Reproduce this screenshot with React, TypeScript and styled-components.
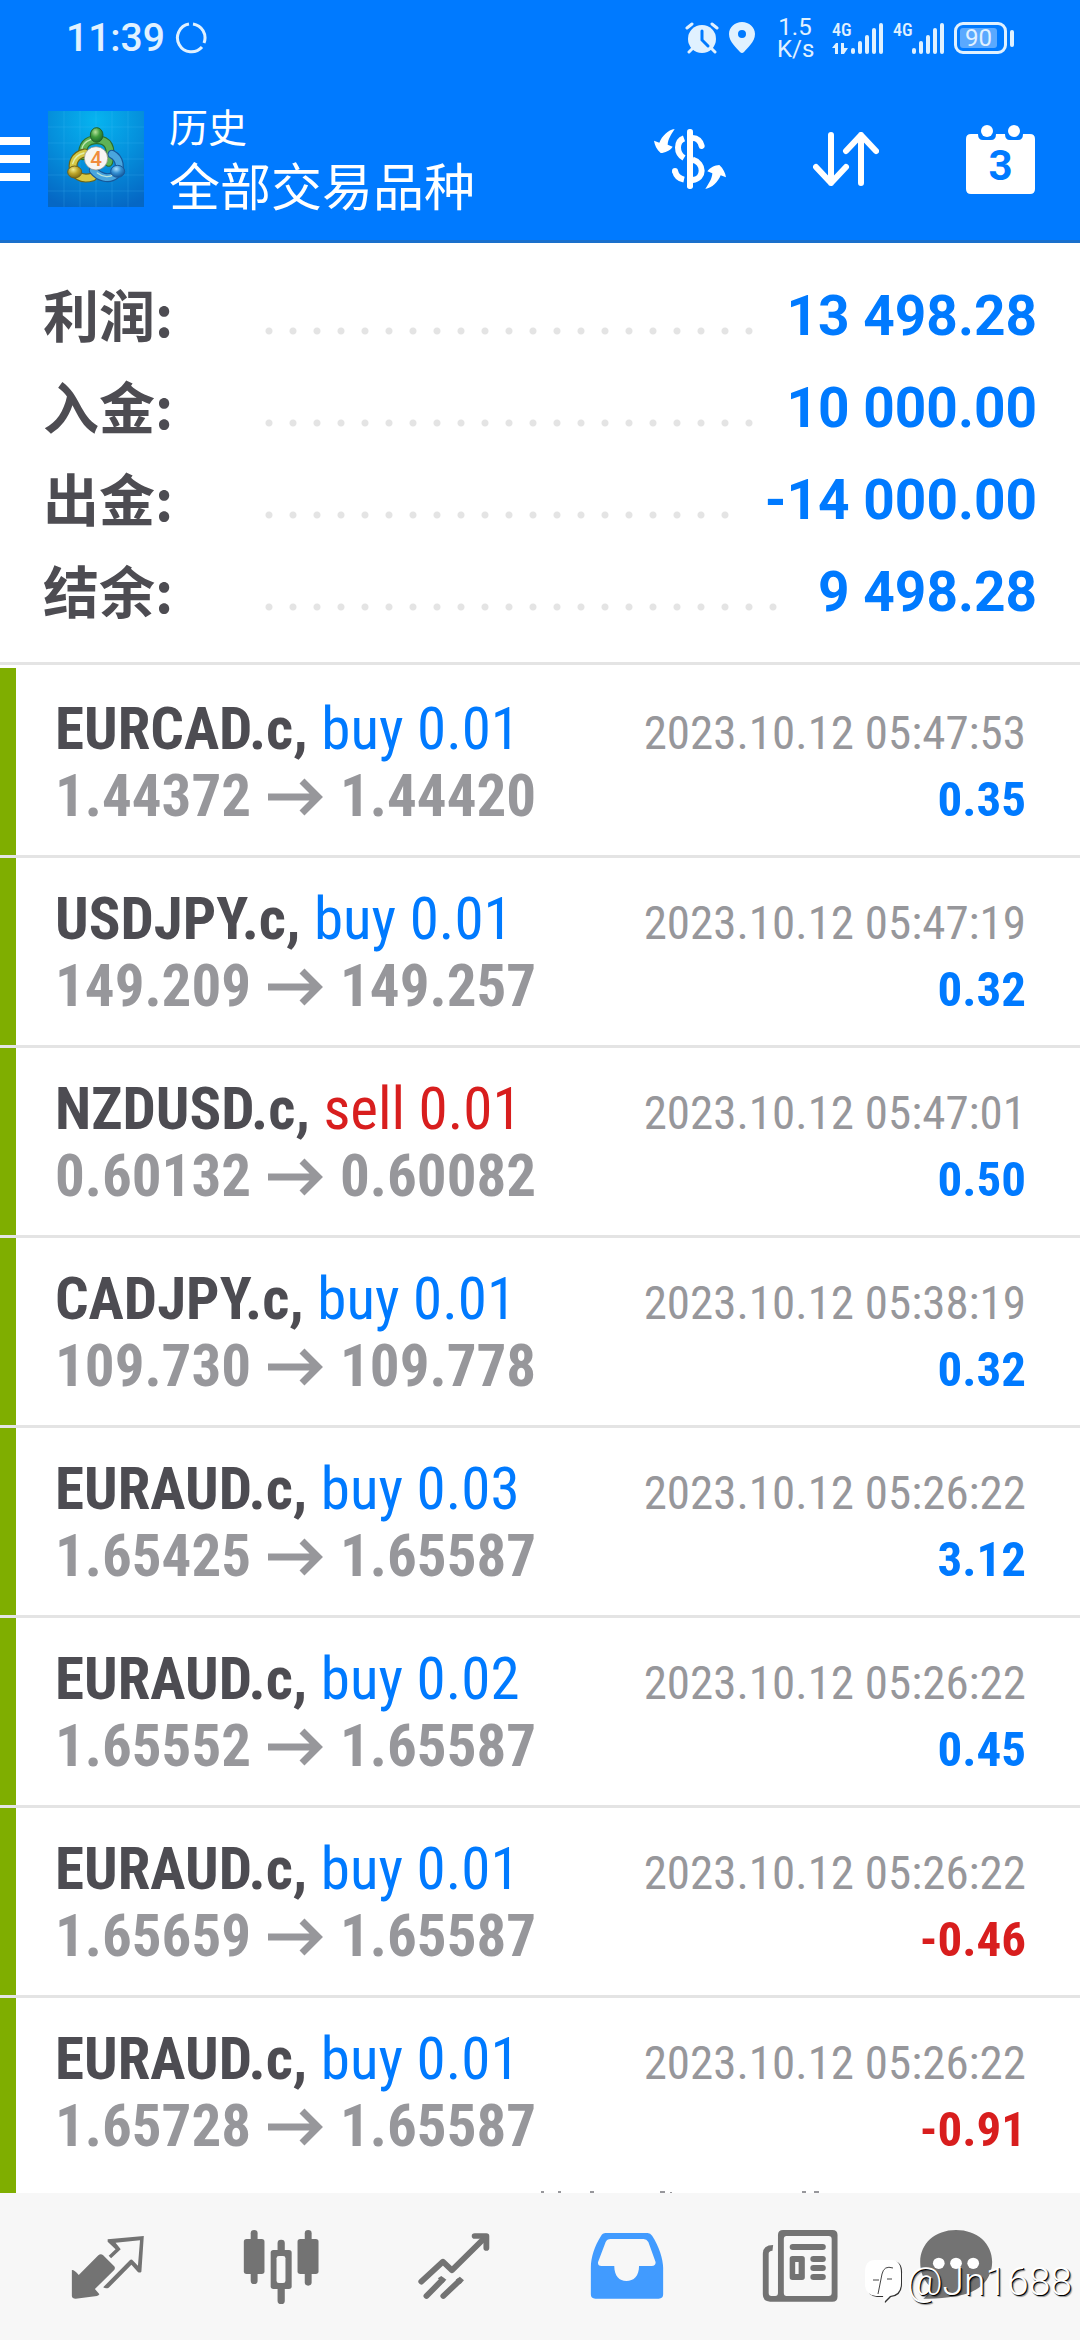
import React from 'react';
import styled, { createGlobalStyle } from 'styled-components';

const sans = 'Roboto, "Noto Sans CJK SC", sans-serif';
const condensed = '"Roboto Condensed", Roboto, "Noto Sans CJK SC", sans-serif';
const color = {
  blue: '#007aff',
  red: '#d81e1e',
  ink: '#4d4c52',
  gray: '#97979b',
  line: '#e4e4e4',
  green: '#7fae00',
  nav: '#f7f7f7',
  icon: '#737373',
  status: '#e0f1ff',
};

const GlobalStyle = createGlobalStyle`
  * { box-sizing: border-box; }
  body { margin: 0; background: #fff; font-family: ${sans}; }
  button { appearance: none; border: 0; padding: 0; background: none; font: inherit; color: inherit; cursor: pointer; }
  svg { display: block; flex: none; }
`;

const Page = styled.div`
  position: relative;
  display: flex;
  flex-direction: column;
  height: 100vh;
  overflow: hidden;
`;

const Header = styled.header`
  flex: none;
  background: ${color.blue};
  color: #fff;
  border-bottom: 3px solid #1a70cc;
`;

const StatusBar = styled.div`
  display: flex;
  align-items: center;
  justify-content: space-between;
  height: 76px;
  padding: 0 66px 0 66px;
  color: ${color.status};
`;

const StatusGroup = styled.div`
  display: flex;
  align-items: center;
  gap: 10px;
`;

const Clock = styled.time`
  font-size: 39px;
  font-weight: 500;
  line-height: 48px;
`;

const Speed = styled.div`
  width: 36px;
  margin: 0 9px 0 12px;
  text-align: center;
  font-size: 24px;
  line-height: 22px;
`;

const Network = styled.div`
  display: flex;
  height: 31px;
`;

const NetworkLabel = styled.span`
  display: flex;
  flex-direction: column;
  width: 19px;
  justify-content: space-between;
  font: 500 18px/14px ${condensed};
`;

const Battery = styled.div`
  display: flex;
  align-items: center;
  gap: 3px;
`;

const BatteryBody = styled.div`
  display: flex;
  width: 53px;
  height: 32px;
  padding: 3px;
  border: 3px solid ${color.status};
  border-radius: 9px;
`;

const BatteryFill = styled.div`
  width: 37px;
  border-radius: 3px;
  background: #5aa9ff;
  text-align: center;
  font-size: 24px;
  line-height: 20px;
`;

const BatteryNub = styled.div`
  width: 4px;
  height: 17px;
  border-radius: 2px;
  background: ${color.status};
`;

const Toolbar = styled.div`
  display: flex;
  align-items: center;
  height: 164px;
  padding: 2px 45px 0 0;
`;

const MenuButton = styled.button`
  display: flex;
  flex-direction: column;
  gap: 10px;
  width: 30px;
  margin-right: 18px;
`;

const MenuBar = styled.span`
  height: 8px;
  background: #fff;
`;

const Titles = styled.div`
  flex: 1;
  padding: 3px 0 0 25px;
`;

const Subtitle = styled.div`
  font-size: 39px;
  line-height: 56px;
`;

const Title = styled.h1`
  margin: 0;
  font-size: 51px;
  font-weight: 400;
  line-height: 64px;
`;

const Actions = styled.div`
  display: flex;
  align-items: center;
  gap: 87px;
`;

const CalendarButton = styled.button`
  display: grid;
  place-items: center;
  & > * { grid-area: 1 / 1; }
`;

const CalendarDay = styled.span`
  padding-top: 14px;
  color: ${color.blue};
  font-size: 42px;
  font-weight: 700;
  line-height: 48px;
`;

const Summary = styled.dl`
  flex: none;
  margin: 0;
  padding: 26px 43px 25px;
  border-bottom: 3px solid ${color.line};
`;

const SummaryRow = styled.div`
  display: flex;
  height: 92px;
`;

const SummaryLabel = styled.dt`
  width: 214px;
  color: ${color.ink};
  font: 700 56px/88px "Noto Sans CJK SC", sans-serif;
`;

const Leader = styled.span`
  flex: 1;
  margin: 58px 28px 0 0;
  height: 8px;
  background: radial-gradient(circle at center, ${color.line} 3px, transparent 4px) 0 0 / 24px 8px repeat-x;
`;

const SummaryValue = styled.dd`
  margin: 0;
  color: ${color.blue};
  font-size: 55px;
  font-weight: 700;
  line-height: 94px;
`;

const Deals = styled.ul`
  flex: 1;
  min-height: 0;
  display: flex;
  flex-direction: column;
  overflow: hidden;
  margin: 0;
  padding: 3px 0 0;
  list-style: none;
  font-family: ${condensed};
`;

const Deal = styled.li`
  flex: none;
  display: flex;
  flex-direction: column;
  min-height: 187px;
  padding: 27px 54px 0 39px;
  border-left: 16px solid ${color.green};
  & + & { margin-top: 3px; box-shadow: -16px -3px ${color.line}, 0 -3px ${color.line}; }
  &:last-child { flex: 1 0 auto; }
`;

const DealLine = styled.div`
  display: flex;
  align-items: baseline;
  justify-content: space-between;
  height: 67px;
  line-height: 67px;
  white-space: nowrap;
`;

const Symbol = styled.span`
  color: ${color.ink};
  font-size: 59px;
  font-weight: 700;
`;

const Volume = styled.span<{ $sell: boolean }>`
  color: ${(p) => (p.$sell ? color.red : color.blue)};
  font-weight: 400;
`;

const Prices = styled.span`
  display: flex;
  align-items: baseline;
  gap: 17px;
  color: ${color.gray};
  font-size: 59px;
  font-weight: 700;
`;

const Stamp = styled.time`
  color: ${color.gray};
  font-size: 47px;
`;

const Profit = styled.span<{ $loss: boolean }>`
  color: ${(p) => (p.$loss ? color.red : color.blue)};
  font-size: 49px;
  font-weight: 700;
`;

const CutOff = styled.svg`
  margin: auto 0 0 469px;
`;

const Nav = styled.nav`
  flex: none;
  display: grid;
  grid-template-columns: repeat(5, 173fr) 140fr;
  height: 147px;
  padding: 0 54px 0 22px;
  background: ${color.nav};
`;

const NavButton = styled.button<{ $active?: boolean }>`
  display: grid;
  place-items: center;
  color: ${(p) => (p.$active ? '#419bff' : color.icon)};
`;

const Watermark = styled.div`
  position: absolute;
  right: 8px;
  bottom: 34px;
  display: flex;
  align-items: center;
  gap: 4px;
  color: #fff;
  font-size: 39px;
  font-weight: 300;
  line-height: 48px;
  text-shadow: 1px 1px 0 #000, 2px 2px 1px rgba(0, 0, 0, 0.4);
`;

const deals = [
  ['EURCAD.c', 'buy', '0.01', '1.44372', '1.44420', '2023.10.12 05:47:53', '0.35'],
  ['USDJPY.c', 'buy', '0.01', '149.209', '149.257', '2023.10.12 05:47:19', '0.32'],
  ['NZDUSD.c', 'sell', '0.01', '0.60132', '0.60082', '2023.10.12 05:47:01', '0.50'],
  ['CADJPY.c', 'buy', '0.01', '109.730', '109.778', '2023.10.12 05:38:19', '0.32'],
  ['EURAUD.c', 'buy', '0.03', '1.65425', '1.65587', '2023.10.12 05:26:22', '3.12'],
  ['EURAUD.c', 'buy', '0.02', '1.65552', '1.65587', '2023.10.12 05:26:22', '0.45'],
  ['EURAUD.c', 'buy', '0.01', '1.65659', '1.65587', '2023.10.12 05:26:22', '-0.46'],
  ['EURAUD.c', 'buy', '0.01', '1.65728', '1.65587', '2023.10.12 05:26:22', '-0.91'],
];

const totals = [
  ['利润', '13 498.28'],
  ['入金', '10 000.00'],
  ['出金', '-14 000.00'],
  ['结余', '9 498.28'],
];

const Signal = () => (
  <svg width="32" height="31" viewBox="0 0 32 31" fill="currentColor">
    <rect x="0" y="25" width="4" height="6" rx="2" />
    <rect x="7" y="18" width="4" height="13" rx="2" />
    <rect x="14" y="12" width="4" height="19" rx="2" />
    <rect x="21" y="5" width="4" height="26" rx="2" />
    <rect x="28" y="0" width="4" height="31" rx="2" />
  </svg>
);

const Logo = () => (
  <svg width="96" height="96" viewBox="24 18 288 288" role="img" aria-label="MetaTrader 4">
    <defs>
      <radialGradient id="sky" cx="0.5" cy="0.1" r="0.95">
        <stop offset="0" stopColor="#06b4f0" />
        <stop offset="0.5" stopColor="#0590dc" />
        <stop offset="1" stopColor="#0567c4" />
      </radialGradient>
      <radialGradient id="gg" cx="0.4" cy="0.3" r="0.7"><stop offset="0" stopColor="#b6e29a" /><stop offset="0.5" stopColor="#3f9c3c" /><stop offset="1" stopColor="#1d6a2a" /></radialGradient>
      <radialGradient id="gy" cx="0.4" cy="0.3" r="0.7"><stop offset="0" stopColor="#f4ee8c" /><stop offset="0.5" stopColor="#bda52a" /><stop offset="1" stopColor="#7f6d16" /></radialGradient>
      <radialGradient id="gb" cx="0.4" cy="0.3" r="0.7"><stop offset="0" stopColor="#a8e0ff" /><stop offset="0.5" stopColor="#3590d2" /><stop offset="1" stopColor="#14589c" /></radialGradient>
    </defs>
    <rect x="24" y="18" width="288" height="288" fill="url(#sky)" />
    <path d="M72 18V306M120 18V306M168 18V306M216 18V306M264 18V306M24 66H312M24 114H312M24 162H312M24 210H312M24 258H312" stroke="#5cc8ff" strokeOpacity="0.28" strokeWidth="2" />
    <g fill="none" strokeLinecap="round">
      <path d="M170 104C140 104 126 122 128 152M170 104C204 104 218 128 206 172" stroke="#2c6e2c" strokeWidth="27" />
      <path d="M170 104C140 104 126 122 128 152M170 104C204 104 218 128 206 172" stroke="#5fb356" strokeWidth="20" />
      <path d="M134 144C104 150 92 178 104 200C116 222 136 222 158 216" stroke="#6b6416" strokeWidth="27" />
      <path d="M134 144C104 150 92 178 104 200C116 222 136 222 158 216" stroke="#d6c844" strokeWidth="20" />
      <path d="M160 196C176 216 206 226 226 210C246 192 240 160 216 148" stroke="#17589a" strokeWidth="27" />
      <path d="M160 196C176 216 206 226 226 210C246 192 240 160 216 148" stroke="#49a6de" strokeWidth="20" />
      <path d="M126 130C130 112 150 100 170 100M98 176C102 160 116 148 132 144M172 204C190 218 210 218 222 208" stroke="#e8ffd8" strokeOpacity="0.7" strokeWidth="4" />
    </g>
    <ellipse cx="170" cy="90" rx="19" ry="22" fill="url(#gg)" stroke="#23602a" strokeWidth="3" />
    <ellipse cx="104" cy="201" rx="21" ry="18" fill="url(#gy)" stroke="#6f611a" strokeWidth="3" />
    <ellipse cx="233" cy="199" rx="21" ry="18" fill="url(#gb)" stroke="#1a5a9c" strokeWidth="3" />
    <circle cx="168" cy="160" r="35" fill="#f7f5f2" stroke="#8a8a80" strokeWidth="2" />
    <text x="168" y="183" textAnchor="middle" fontFamily="Roboto, sans-serif" fontSize="62" fontWeight="500" fill="#f08c3c">4</text>
  </svg>
);

const Arrow = () => (
  <svg width="55" height="38" viewBox="0 0 55 38" fill="none" stroke="currentColor" strokeWidth="7" role="img" aria-label="to">
    <path d="M0 19H50M34 3L50 19L34 35" />
  </svg>
);

const NavIcon = ({ x, children }: { x: number; children: React.ReactNode }) => (
  <svg width="84" height="74" viewBox={`${x} 207 244 222`} preserveAspectRatio="none" fill="currentColor">
    {children}
  </svg>
);

export default function App() {
  return (
    <Page>
      <GlobalStyle />
      <Header>
        <StatusBar>
          <StatusGroup>
            <Clock>11:39</Clock>
            <svg width="32" height="32" viewBox="0 0 32 32" fill="none" stroke="currentColor" strokeWidth="3">
              <path d="M18 2A14 14 0 0 1 29 21M27 25A14 14 0 1 1 14 2" />
            </svg>
          </StatusGroup>
          <StatusGroup>
            <svg width="34" height="32" viewBox="0 0 34 32" fill="currentColor">
              <circle cx="17" cy="17" r="14" />
              <path d="M2 6L7 2M32 6L27 2M8 26L4 30M26 26L30 30" stroke="currentColor" strokeWidth="3" strokeLinecap="round" />
              <path d="M17 9V18L23 24" fill="none" stroke={color.blue} strokeWidth="3" strokeLinecap="round" />
            </svg>
            <svg width="26" height="32" viewBox="0 0 26 32" fill="currentColor" fillRule="evenodd">
              <path d="M13 0C20 0 26 5 26 12C26 20 18 26 15 30Q13 32 11 30C8 26 0 20 0 12C0 5 6 0 13 0ZM13 8A4 4 0 1 0 13 16A4 4 0 1 0 13 8Z" />
            </svg>
            <Speed>
              <div>1.5</div>
              <div>K/s</div>
            </Speed>
            <Network>
              <NetworkLabel>
                4G
                <svg width="16" height="11" viewBox="0 0 16 11" fill="currentColor">
                  <path d="M0 5L4 0H6V11H3V5ZM9 0H12V5H16L12 11H9Z" />
                </svg>
              </NetworkLabel>
              <Signal />
            </Network>
            <Network>
              <NetworkLabel>4G</NetworkLabel>
              <Signal />
            </Network>
            <Battery>
              <BatteryBody>
                <BatteryFill>90</BatteryFill>
              </BatteryBody>
              <BatteryNub />
            </Battery>
          </StatusGroup>
        </StatusBar>
        <Toolbar>
          <MenuButton aria-label="菜单">
            <MenuBar />
            <MenuBar />
            <MenuBar />
          </MenuButton>
          <Logo />
          <Titles>
            <Subtitle>历史</Subtitle>
            <Title>全部交易品种</Title>
          </Titles>
          <Actions>
            <button aria-label="货币">
              <svg width="72" height="60" viewBox="42 57 216 180" fill="#fff">
                <rect x="141" y="57" width="18" height="180" rx="8" />
                <g fill="none" stroke="#fff" strokeWidth="18">
                  <path d="M132 85C108 94 108 130 132 144" />
                  <path d="M158 84C172 84 182 94 185 108" strokeLinecap="round" />
                  <path d="M158 149C194 160 194 206 158 210" />
                  <path d="M132 209C118 206 108 196 105 183" />
                </g>
                <circle cx="105" cy="183" r="9" />
                <path d="M42 92L58 98C66 78 84 60 104 57C92 76 84 88 83 104L98 110C90 122 75 128 62 129C50 118 44 105 42 92Z" />
                <path transform="rotate(180 150 147)" d="M42 92L58 98C66 78 84 60 104 57C92 76 84 88 83 104L98 110C90 122 75 128 62 129C50 118 44 105 42 92Z" />
              </svg>
            </button>
            <button aria-label="排序">
              <svg width="66" height="54" viewBox="0 0 66 54" fill="none" stroke="#fff" strokeWidth="6" strokeLinecap="round" strokeLinejoin="round">
                <path d="M18 3V51M3 35L18 51L33 35M48 51V3M33 19L48 3L63 19" />
              </svg>
            </button>
            <CalendarButton aria-label="日期">
              <svg width="69" height="69" viewBox="0 0 69 69" fill="#fff">
                <path d="M5 9H12Q12 15 17 15H25Q30 15 30 9H39Q39 15 44 15H52Q57 15 57 9H64Q69 9 69 14V64Q69 69 64 69H5Q0 69 0 64V14Q0 9 5 9Z" />
                <circle cx="21" cy="6" r="6" />
                <circle cx="48" cy="6" r="6" />
              </svg>
              <CalendarDay>3</CalendarDay>
            </CalendarButton>
          </Actions>
        </Toolbar>
      </Header>

      <Summary>
        {totals.map(([label, value]) => (
          <SummaryRow key={label}>
            <SummaryLabel>{label}:</SummaryLabel>
            <Leader />
            <SummaryValue>{value}</SummaryValue>
          </SummaryRow>
        ))}
      </Summary>

      <Deals>
        {deals.map(([symbol, side, volume, open, close, time, profit], i) => (
          <Deal key={i}>
            <DealLine>
              <Symbol>
                {symbol}, <Volume $sell={side === 'sell'}>{side} {volume}</Volume>
              </Symbol>
              <Stamp>{time}</Stamp>
            </DealLine>
            <DealLine>
              <Prices>
                <span>{open}</span>
                <Arrow />
                <span>{close}</span>
              </Prices>
              <Profit $loss={profit.startsWith('-')}>{profit}</Profit>
            </DealLine>
            {i === deals.length - 1 && (
              <CutOff width="300" height="2" viewBox="0 0 300 2" fill={color.gray} aria-hidden="true">
                <path d="M17 0h3v2h-3zM34 0h3v2h-3zM66 0h4v2h-4zM136 0h5v2h-5zM146 1h2v1h-2zM278 0h4v2h-4zM290 0h5v2h-5z" />
              </CutOff>
            )}
          </Deal>
        ))}
      </Deals>

      <Nav>
        <NavButton aria-label="报价">
          <NavIcon x={198}>
            <path d="M215 327Q222 326 235 342L292 283Q299 276 306 283L338 316Q342 321 338 327L282 384L295 400Q293 404 288 405L226 413Q216 413 215 405Z" />
            <path d="M319 235L424 225L417 332Q412 337 406 332L388 311L322 380Q314 384 306 379L384 297Q388 293 393 299L407 314L413 238L342 245L357 265L329 292L322 284L342 265L319 242Z" />
          </NavIcon>
        </NavButton>
        <NavButton aria-label="图表">
          <NavIcon x={695}>
            <rect x="729" y="207" width="20" height="162" rx="10" />
            <rect x="709" y="234" width="60" height="105" rx="8" />
            <rect x="886" y="207" width="20" height="167" rx="10" />
            <rect x="865" y="234" width="61" height="105" rx="8" />
            <rect x="807" y="236" width="21" height="193" rx="10" />
            <rect x="787" y="267" width="61" height="117" rx="8" />
            <rect x="804" y="285" width="26" height="81" rx="7" fill={color.nav} />
          </NavIcon>
        </NavButton>
        <NavButton aria-label="交易">
          <NavIcon x={1195}>
            <g fill="none" stroke="currentColor" strokeWidth="17" strokeLinecap="round" strokeLinejoin="round">
              <path d="M1222 362L1285 302L1311 328L1405 232" />
              <path d="M1377 225H1411V261" />
              <path d="M1237 405L1282 358M1286 405L1332 360" />
            </g>
            <path d="M1280 345L1295 356L1285 366L1270 352ZM1334 347L1346 358L1336 369L1322 356Z" />
          </NavIcon>
        </NavButton>
        <NavButton aria-label="历史" aria-current="page" $active>
          <NavIcon x={130}>
            <path fillRule="evenodd" d="M190 216H312Q320 216 325 224C345 255 357 295 357 320V400Q357 413 344 413H160Q147 413 147 400V320C147 290 158 255 176 226Q181 216 190 216ZM204 234H300Q309 234 314 243L335 303Q336 315 324 315H287C287 345 272 360 250 360C230 360 215 345 215 315H178Q166 315 168 303L190 243Q194 234 204 234Z" />
          </NavIcon>
        </NavButton>
        <NavButton aria-label="新闻">
          <NavIcon x={633}>
            <path fillRule="evenodd" d="M706 207H849Q864 207 864 222V407Q864 422 849 422H668Q647 422 647 400V278Q647 252 677 252L675 269Q664 270 664 278V396Q664 405 672 405H683Q691 405 691 396V222Q691 207 706 207ZM716 225Q708 225 708 234V396Q708 405 716 405H838Q847 405 847 396V234Q847 225 838 225Z" />
            <rect x="725" y="249" width="105" height="18" rx="9" />
            <path fillRule="evenodd" d="M733 285H761Q769 285 769 293V349Q769 357 761 357H733Q725 357 725 349V293Q725 285 733 285ZM741 303V339H751V303Z" />
            <rect x="785" y="285" width="45" height="18" rx="9" />
            <rect x="785" y="312" width="45" height="18" rx="9" />
            <rect x="785" y="339" width="45" height="18" rx="9" />
          </NavIcon>
        </NavButton>
        <NavButton aria-label="更多">
          <NavIcon x={1091}>
            <path d="M1213 207C1275 207 1318 248 1318 303C1318 362 1270 399 1213 405C1180 412 1150 414 1118 413C1130 404 1136 394 1137 375C1118 357 1109 332 1109 303C1109 248 1152 207 1213 207Z" />
            <circle cx="1163" cy="307" r="17" fill="#fff" />
            <circle cx="1213" cy="307" r="17" fill="#fff" />
            <circle cx="1263" cy="307" r="17" fill="#fff" />
          </NavIcon>
        </NavButton>
      </Nav>

      <Watermark>
        <svg width="38" height="44" viewBox="0 0 38 44">
          <path d="M11 1H27Q38 1 37 14V24Q37 36 26 37L20 43L19 37H12Q2 36 1 25V14Q1 1 11 1Z" fill="#333" />
          <path d="M10 0H26Q36 0 36 13V23Q36 35 25 36L19 42L18 36H11Q0 35 0 24V12Q0 0 10 0Z" fill="#fff" />
          <path d="M28 8Q19 5 17 14L13 34M8 20H14M22 19H27" fill="none" stroke="#444" strokeWidth="1" />
        </svg>
        <span>@Jn1688</span>
      </Watermark>
    </Page>
  );
}
